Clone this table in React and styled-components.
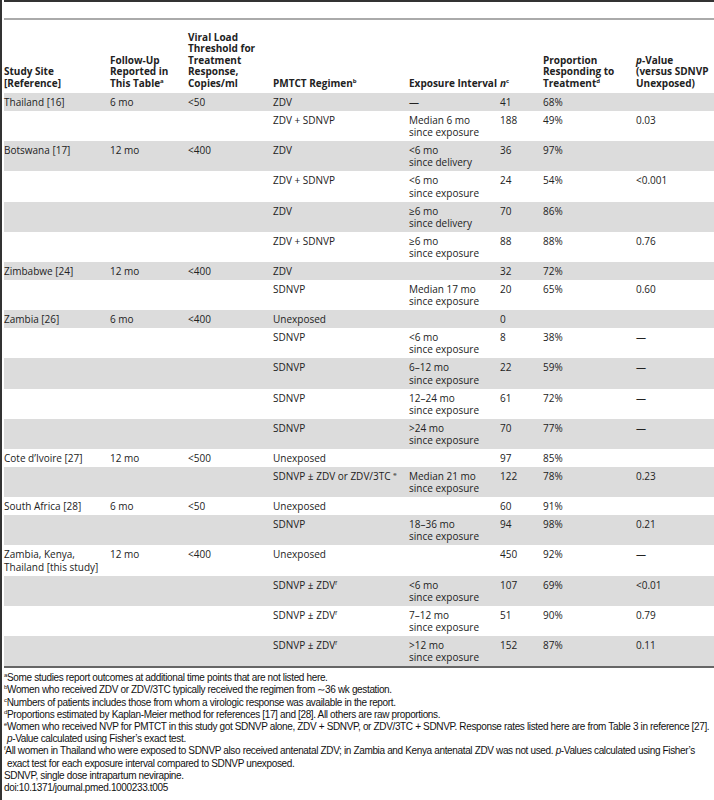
import styled, { createGlobalStyle } from 'styled-components';

const Global = createGlobalStyle`
  html, body { margin: 0; padding: 0; background: #fff; }
  body { font-family: "Open Sans", "Liberation Sans", sans-serif; color: #222; }
`;

const Page = styled.div`
  width: 714px;
  min-height: 800px;
  border-left: 2px solid #333;
  padding-left: 2px;
  box-sizing: border-box;
`;

const Rule = styled.div`
  height: 2px;
  background: ${props => props.color};
  margin-bottom: ${props => props.gap || 0}px;
`;

const Table = styled.table`
  width: 100%;
  border-collapse: collapse;
  table-layout: fixed;
  font-size: 10px;
  line-height: 12.2px;
  border-bottom: 2px solid #666;
`;

const Head = styled.th`
  text-align: left;
  vertical-align: bottom;
  font-weight: 700;
  line-height: 11.5px;
  padding: 11.5px 0 4px 0;
`;

const Row = styled.tr`
  background: ${props => props.shade ? '#dcdcdc' : '#fff'};
`;

const Cell = styled.td`
  vertical-align: top;
  padding: 3px 0 2.8px 0;
  white-space: nowrap;
`;

const Sup = styled.sup`
  font-size: 6px;
  line-height: 0;
  vertical-align: 4px;
`;

const Notes = styled.div`
  padding: 4px 0 0 0;
  font-family: "Liberation Sans", sans-serif;
  font-size: 10px;
  letter-spacing: -0.35px;
  line-height: 12.2px;
  color: #111;
`;

const Note = styled.div`
  white-space: nowrap;
  padding-left: ${props => props.indent ? 3 : 0}px;
`;

const widths = [106, 78, 85, 136, 91, 43, 93, 78];

const L = '<';

const rows = [
  ['Thailand [16]', '6 mo', L + '50', 'ZDV', ['—'], '41', '68%', ''],
  ['', '', '', 'ZDV + SDNVP', ['Median 6 mo', 'since exposure'], '188', '49%', '0.03'],
  ['Botswana [17]', '12 mo', L + '400', 'ZDV', [L + '6 mo', 'since delivery'], '36', '97%', ''],
  ['', '', '', 'ZDV + SDNVP', [L + '6 mo', 'since exposure'], '24', '54%', L + '0.001'],
  ['', '', '', 'ZDV', ['≥6 mo', 'since delivery'], '70', '86%', ''],
  ['', '', '', 'ZDV + SDNVP', ['≥6 mo', 'since exposure'], '88', '88%', '0.76'],
  ['Zimbabwe [24]', '12 mo', L + '400', 'ZDV', [], '32', '72%', ''],
  ['', '', '', 'SDNVP', ['Median 17 mo', 'since exposure'], '20', '65%', '0.60'],
  ['Zambia [26]', '6 mo', L + '400', 'Unexposed', [], '0', '', ''],
  ['', '', '', 'SDNVP', [L + '6 mo', 'since exposure'], '8', '38%', '—'],
  ['', '', '', 'SDNVP', ['6–12 mo', 'since exposure'], '22', '59%', '—'],
  ['', '', '', 'SDNVP', ['12–24 mo', 'since exposure'], '61', '72%', '—'],
  ['', '', '', 'SDNVP', ['>24 mo', 'since exposure'], '70', '77%', '—'],
  ['Cote d’Ivoire [27]', '12 mo', L + '500', 'Unexposed', [], '97', '85%', ''],
  ['', '', '', <>SDNVP ± ZDV or ZDV/3TC <Sup>e</Sup></>, ['Median 21 mo', 'since exposure'], '122', '78%', '0.23'],
  ['South Africa [28]', '6 mo', L + '50', 'Unexposed', [], '60', '91%', ''],
  ['', '', '', 'SDNVP', ['18–36 mo', 'since exposure'], '94', '98%', '0.21'],
  [<>Zambia, Kenya,<br />Thailand [this study]</>, '12 mo', L + '400', 'Unexposed', [], '450', '92%', '—'],
  ['', '', '', <>SDNVP ± ZDV<Sup>f</Sup></>, [L + '6 mo', 'since exposure'], '107', '69%', L + '0.01'],
  ['', '', '', <>SDNVP ± ZDV<Sup>f</Sup></>, ['7–12 mo', 'since exposure'], '51', '90%', '0.79'],
  ['', '', '', <>SDNVP ± ZDV<Sup>f</Sup></>, ['>12 mo', 'since exposure'], '152', '87%', '0.11'],
];

export default function App() {
  return (
    <Page>
      <Global />
      <Rule color="#333" gap={16} />
      <Rule color="#aaa" />
      <Table>
        <colgroup>
          {widths.map((w, i) => <col key={i} style={{ width: w }} />)}
        </colgroup>
        <thead>
          <tr>
            <Head>Study Site<br />[Reference]</Head>
            <Head>Follow-Up<br />Reported in<br />This Table<Sup>a</Sup></Head>
            <Head>Viral Load<br />Threshold for<br />Treatment<br />Response,<br />Copies/ml</Head>
            <Head>PMTCT Regimen<Sup>b</Sup></Head>
            <Head>Exposure Interval</Head>
            <Head><i>n</i><Sup>c</Sup></Head>
            <Head>Proportion<br />Responding to<br />Treatment<Sup>d</Sup></Head>
            <Head><i>p</i>-Value<br />(versus SDNVP<br />Unexposed)</Head>
          </tr>
        </thead>
        <tbody>
          {rows.map((r, i) => (
            <Row key={i} shade={i % 2 === 0}>
              <Cell>{r[0]}</Cell>
              <Cell>{r[1]}</Cell>
              <Cell>{r[2]}</Cell>
              <Cell>{r[3]}</Cell>
              <Cell>{r[4].map((t, j) => <div key={j}>{t}</div>)}</Cell>
              <Cell>{r[5]}</Cell>
              <Cell>{r[6]}</Cell>
              <Cell>{r[7]}</Cell>
            </Row>
          ))}
        </tbody>
      </Table>
      <Notes>
        <Note><Sup>a</Sup>Some studies report outcomes at additional time points that are not listed here.</Note>
        <Note><Sup>b</Sup>Women who received ZDV or ZDV/3TC typically received the regimen from ∼36 wk gestation.</Note>
        <Note><Sup>c</Sup>Numbers of patients includes those from whom a virologic response was available in the report.</Note>
        <Note><Sup>d</Sup>Proportions estimated by Kaplan-Meier method for references [17] and [28]. All others are raw proportions.</Note>
        <Note><Sup>e</Sup>Women who received NVP for PMTCT in this study got SDNVP alone, ZDV + SDNVP, or ZDV/3TC + SDNVP. Response rates listed here are from Table 3 in reference [27].</Note>
        <Note indent><i>p</i>-Value calculated using Fisher’s exact test.</Note>
        <Note><Sup>f</Sup>All women in Thailand who were exposed to SDNVP also received antenatal ZDV; in Zambia and Kenya antenatal ZDV was not used. <i>p</i>-Values calculated using Fisher’s</Note>
        <Note indent>exact test for each exposure interval compared to SDNVP unexposed.</Note>
        <Note>SDNVP, single dose intrapartum nevirapine.</Note>
        <Note>doi:10.1371/journal.pmed.1000233.t005</Note>
      </Notes>
    </Page>
  );
}
